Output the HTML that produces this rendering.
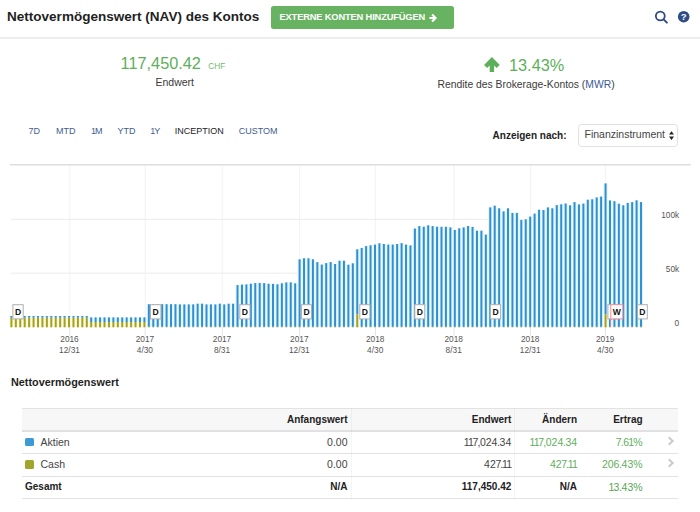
<!DOCTYPE html>
<html lang="de">
<head>
<meta charset="utf-8">
<title>Nettovermögenswert (NAV) des Kontos</title>
<style>
html,body{margin:0;padding:0;background:#fff;}
body{width:700px;height:512px;position:relative;overflow:hidden;font-family:"Liberation Sans",sans-serif;color:#333;}
.abs{position:absolute;white-space:nowrap;line-height:1;}
.title{left:7px;top:10.6px;font-size:12.4px;font-weight:bold;color:#1f1f1f;transform-origin:0 0;transform:scaleX(1.092);}
.btn{left:270.5px;top:6.2px;width:183.5px;height:23.3px;background:#68b361;border-radius:2.5px;color:#fff;font-weight:bold;font-size:9.3px;letter-spacing:-0.15px;box-sizing:border-box;padding:6.7px 0 0 9px;}
.hline{left:0;top:37px;width:700px;height:2px;background:#ededed;}
.big{font-size:16.3px;color:#5db05a;}
.chf{font-size:8.3px;color:#74b86f;}
.sub{font-size:10.5px;color:#3a3a3a;}
.link{color:#3a5a94;}
.tab{top:126.7px;font-size:9px;color:#3f5d92;}
.tab.act{color:#222;}
.tab.n1::first-letter{letter-spacing:-1px;}
.lab{font-size:10px;font-weight:bold;color:#222;}
.sel{left:577.5px;top:123.5px;width:100.5px;height:23px;box-sizing:border-box;border:1px solid #e1e1e1;border-radius:3.5px;background:#fff;font-size:10.5px;color:#444;padding:4.9px 0 0 6px;}
svg.chart{position:absolute;left:0;top:0;}
svg.chart text{font-family:"Liberation Sans",sans-serif;font-size:8.3px;fill:#555;}
svg.chart text.fl{font-weight:bold;fill:#111;font-size:8.6px;}
.h2{left:10.5px;top:377.9px;font-size:10.3px;font-weight:bold;color:#1f1f1f;transform-origin:0 0;transform:scaleX(1.052);}
table.t{position:absolute;left:22px;top:408px;width:656px;table-layout:fixed;border-collapse:collapse;font-size:10.5px;color:#444;}

.btn svg.arr{position:absolute;left:157.7px;top:6.5px;}
table.t th{background:#f7f7f7;border-top:1px solid #e3e3e3;border-bottom:2px solid #e1e1e1;height:22.8px;font-size:10px;font-weight:bold;color:#222;text-align:right;padding:0;}
table.t td{height:22.5px;border-bottom:1px solid #e2e2e2;text-align:right;padding:0 0 1.8px 0;}
table.t th,table.t td{box-sizing:border-box;}
table.t .c0{text-align:left;padding-left:3px;width:173px;}
table.t th.c1{width:152.5px;}
table.t th.c2{width:163.8px;}
table.t th.c3{width:65.8px;}
table.t th.c4{width:65.5px;}
table.t .c5{width:35.4px;padding-right:3.4px;}
table.t .c5 svg{vertical-align:middle;position:relative;top:-2px;}
table.t td.g{color:#62ae5e;}
table.t tr.tot td{font-weight:bold;color:#222;font-size:10px;padding-bottom:1.2px;height:22.5px;}
table.t tr.tot td.g{color:#56a653;font-weight:normal;font-size:10.5px;}
i.sq{display:inline-block;width:9.3px;height:8.8px;border-radius:1.5px;vertical-align:-0.6px;margin:0 6.7px 0 -0.5px;}

table.t b{font-weight:inherit;}
table.t b.o{margin:0 -0.8px;}
table.t b.p{margin:0 -0.4px;}
table.t b.s{margin:0 -0.6px 0 -0.4px;}
.vd{position:absolute;top:408px;width:1px;height:91px;background:rgba(0,0,0,0.04);}
</style>
</head>
<body>
<svg class="chart" width="700" height="512" viewBox="0 0 700 512">
<g shape-rendering="auto">
<line x1="69.8" y1="165" x2="69.8" y2="327" stroke="#f4f4f4" stroke-width="1.2"/>
<line x1="69.8" y1="327" x2="69.8" y2="335.5" stroke="#e4e4e4" stroke-width="1"/>
<line x1="145.2" y1="165" x2="145.2" y2="327" stroke="#f4f4f4" stroke-width="1.2"/>
<line x1="145.2" y1="327" x2="145.2" y2="335.5" stroke="#e4e4e4" stroke-width="1"/>
<line x1="222.3" y1="165" x2="222.3" y2="327" stroke="#f4f4f4" stroke-width="1.2"/>
<line x1="222.3" y1="327" x2="222.3" y2="335.5" stroke="#e4e4e4" stroke-width="1"/>
<line x1="299.6" y1="165" x2="299.6" y2="327" stroke="#f4f4f4" stroke-width="1.2"/>
<line x1="299.6" y1="327" x2="299.6" y2="335.5" stroke="#e4e4e4" stroke-width="1"/>
<line x1="375.5" y1="165" x2="375.5" y2="327" stroke="#f4f4f4" stroke-width="1.2"/>
<line x1="375.5" y1="327" x2="375.5" y2="335.5" stroke="#e4e4e4" stroke-width="1"/>
<line x1="454.0" y1="165" x2="454.0" y2="327" stroke="#f4f4f4" stroke-width="1.2"/>
<line x1="454.0" y1="327" x2="454.0" y2="335.5" stroke="#e4e4e4" stroke-width="1"/>
<line x1="530.5" y1="165" x2="530.5" y2="327" stroke="#f4f4f4" stroke-width="1.2"/>
<line x1="530.5" y1="327" x2="530.5" y2="335.5" stroke="#e4e4e4" stroke-width="1"/>
<line x1="605.5" y1="165" x2="605.5" y2="327" stroke="#f4f4f4" stroke-width="1.2"/>
<line x1="605.5" y1="327" x2="605.5" y2="335.5" stroke="#e4e4e4" stroke-width="1"/>
<line x1="11" y1="219.3" x2="643.5" y2="219.3" stroke="#ececec" stroke-width="1"/>
<line x1="11" y1="273.2" x2="643.5" y2="273.2" stroke="#ececec" stroke-width="1"/>
<line x1="10" y1="164.7" x2="690.8" y2="164.7" stroke="#dedede" stroke-width="1.5"/>
</g>
<g>
<rect x="9.18" y="316.0" width="4.45" height="1.7" fill="#e6f6ff"/>
<rect x="9.18" y="317.7" width="4.45" height="9.6" fill="#fafae2"/>
<rect x="13.62" y="316.0" width="4.45" height="1.7" fill="#e6f6ff"/>
<rect x="13.62" y="317.7" width="4.45" height="9.6" fill="#fafae2"/>
<rect x="18.05" y="316.0" width="4.45" height="1.7" fill="#e6f6ff"/>
<rect x="18.05" y="317.7" width="4.45" height="9.6" fill="#fafae2"/>
<rect x="22.48" y="316.0" width="4.45" height="1.7" fill="#e6f6ff"/>
<rect x="22.48" y="317.7" width="4.45" height="9.6" fill="#fafae2"/>
<rect x="26.92" y="316.0" width="4.45" height="1.7" fill="#e6f6ff"/>
<rect x="26.92" y="317.7" width="4.45" height="9.6" fill="#fafae2"/>
<rect x="31.35" y="316.0" width="4.45" height="1.7" fill="#e6f6ff"/>
<rect x="31.35" y="317.7" width="4.45" height="9.6" fill="#fafae2"/>
<rect x="35.79" y="316.0" width="4.45" height="1.7" fill="#e6f6ff"/>
<rect x="35.79" y="317.7" width="4.45" height="9.6" fill="#fafae2"/>
<rect x="40.22" y="316.0" width="4.45" height="1.7" fill="#e6f6ff"/>
<rect x="40.22" y="317.7" width="4.45" height="9.6" fill="#fafae2"/>
<rect x="44.66" y="316.0" width="4.45" height="1.7" fill="#e6f6ff"/>
<rect x="44.66" y="317.7" width="4.45" height="9.6" fill="#fafae2"/>
<rect x="49.09" y="316.0" width="4.45" height="1.7" fill="#e6f6ff"/>
<rect x="49.09" y="317.7" width="4.45" height="9.6" fill="#fafae2"/>
<rect x="53.52" y="316.0" width="4.45" height="1.7" fill="#e6f6ff"/>
<rect x="53.52" y="317.7" width="4.45" height="9.6" fill="#fafae2"/>
<rect x="57.96" y="316.0" width="4.45" height="1.7" fill="#e6f6ff"/>
<rect x="57.96" y="317.7" width="4.45" height="9.6" fill="#fafae2"/>
<rect x="62.39" y="316.0" width="4.45" height="1.7" fill="#e6f6ff"/>
<rect x="62.39" y="317.7" width="4.45" height="9.6" fill="#fafae2"/>
<rect x="66.83" y="316.0" width="4.45" height="1.7" fill="#e6f6ff"/>
<rect x="66.83" y="317.7" width="4.45" height="9.6" fill="#fafae2"/>
<rect x="71.26" y="316.0" width="4.45" height="1.7" fill="#e6f6ff"/>
<rect x="71.26" y="317.7" width="4.45" height="9.6" fill="#fafae2"/>
<rect x="75.69" y="316.0" width="4.45" height="1.7" fill="#e6f6ff"/>
<rect x="75.69" y="317.7" width="4.45" height="9.6" fill="#fafae2"/>
<rect x="80.13" y="316.0" width="4.45" height="1.7" fill="#e6f6ff"/>
<rect x="80.13" y="317.7" width="4.45" height="9.6" fill="#fafae2"/>
<rect x="84.56" y="316.0" width="4.45" height="1.7" fill="#e6f6ff"/>
<rect x="84.56" y="317.7" width="4.45" height="9.6" fill="#fafae2"/>
<rect x="89.00" y="317.4" width="4.45" height="4.6" fill="#e6f6ff"/>
<rect x="89.00" y="322.0" width="4.45" height="5.3" fill="#fafae2"/>
<rect x="93.43" y="317.4" width="4.45" height="4.6" fill="#e6f6ff"/>
<rect x="93.43" y="322.0" width="4.45" height="5.3" fill="#fafae2"/>
<rect x="97.86" y="317.4" width="4.45" height="4.6" fill="#e6f6ff"/>
<rect x="97.86" y="322.0" width="4.45" height="5.3" fill="#fafae2"/>
<rect x="102.30" y="317.4" width="4.45" height="4.6" fill="#e6f6ff"/>
<rect x="102.30" y="322.0" width="4.45" height="5.3" fill="#fafae2"/>
<rect x="106.73" y="317.4" width="4.45" height="4.6" fill="#e6f6ff"/>
<rect x="106.73" y="322.0" width="4.45" height="5.3" fill="#fafae2"/>
<rect x="111.17" y="317.4" width="4.45" height="4.6" fill="#e6f6ff"/>
<rect x="111.17" y="322.0" width="4.45" height="5.3" fill="#fafae2"/>
<rect x="115.60" y="317.4" width="4.45" height="4.6" fill="#e6f6ff"/>
<rect x="115.60" y="322.0" width="4.45" height="5.3" fill="#fafae2"/>
<rect x="120.03" y="317.4" width="4.45" height="4.6" fill="#e6f6ff"/>
<rect x="120.03" y="322.0" width="4.45" height="5.3" fill="#fafae2"/>
<rect x="124.47" y="317.4" width="4.45" height="4.6" fill="#e6f6ff"/>
<rect x="124.47" y="322.0" width="4.45" height="5.3" fill="#fafae2"/>
<rect x="128.90" y="317.4" width="4.45" height="4.6" fill="#e6f6ff"/>
<rect x="128.90" y="322.0" width="4.45" height="5.3" fill="#fafae2"/>
<rect x="133.33" y="317.4" width="4.45" height="4.6" fill="#e6f6ff"/>
<rect x="133.33" y="322.0" width="4.45" height="5.3" fill="#fafae2"/>
<rect x="137.77" y="317.4" width="4.45" height="4.6" fill="#e6f6ff"/>
<rect x="137.77" y="322.0" width="4.45" height="5.3" fill="#fafae2"/>
<rect x="142.20" y="317.4" width="4.45" height="4.6" fill="#e6f6ff"/>
<rect x="142.20" y="322.0" width="4.45" height="5.3" fill="#fafae2"/>
<rect x="146.64" y="304.2" width="4.45" height="22.6" fill="#e6f6ff"/>
<rect x="151.07" y="304.2" width="4.45" height="22.6" fill="#e6f6ff"/>
<rect x="155.50" y="304.2" width="4.45" height="22.6" fill="#e6f6ff"/>
<rect x="159.94" y="304.2" width="4.45" height="22.6" fill="#e6f6ff"/>
<rect x="164.37" y="304.2" width="4.45" height="22.6" fill="#e6f6ff"/>
<rect x="168.81" y="304.2" width="4.45" height="22.6" fill="#e6f6ff"/>
<rect x="173.24" y="304.2" width="4.45" height="22.6" fill="#e6f6ff"/>
<rect x="177.68" y="304.4" width="4.45" height="22.4" fill="#e6f6ff"/>
<rect x="182.11" y="304.4" width="4.45" height="22.4" fill="#e6f6ff"/>
<rect x="186.54" y="304.4" width="4.45" height="22.4" fill="#e6f6ff"/>
<rect x="190.98" y="304.4" width="4.45" height="22.4" fill="#e6f6ff"/>
<rect x="195.41" y="303.7" width="4.45" height="23.1" fill="#e6f6ff"/>
<rect x="199.84" y="303.7" width="4.45" height="23.1" fill="#e6f6ff"/>
<rect x="204.28" y="304.4" width="4.45" height="22.4" fill="#e6f6ff"/>
<rect x="208.71" y="304.4" width="4.45" height="22.4" fill="#e6f6ff"/>
<rect x="213.15" y="304.4" width="4.45" height="22.4" fill="#e6f6ff"/>
<rect x="217.58" y="303.7" width="4.45" height="23.1" fill="#e6f6ff"/>
<rect x="222.01" y="304.4" width="4.45" height="22.4" fill="#e6f6ff"/>
<rect x="226.45" y="303.7" width="4.45" height="23.1" fill="#e6f6ff"/>
<rect x="230.88" y="303.7" width="4.45" height="23.1" fill="#e6f6ff"/>
<rect x="235.32" y="285.1" width="4.45" height="41.7" fill="#e6f6ff"/>
<rect x="239.75" y="284.6" width="4.45" height="42.2" fill="#e6f6ff"/>
<rect x="244.19" y="284.4" width="4.45" height="42.4" fill="#e6f6ff"/>
<rect x="248.62" y="283.7" width="4.45" height="43.1" fill="#e6f6ff"/>
<rect x="253.05" y="283.1" width="4.45" height="43.7" fill="#e6f6ff"/>
<rect x="257.49" y="283.0" width="4.45" height="43.8" fill="#e6f6ff"/>
<rect x="261.92" y="283.1" width="4.45" height="43.7" fill="#e6f6ff"/>
<rect x="266.36" y="283.7" width="4.45" height="43.1" fill="#e6f6ff"/>
<rect x="270.79" y="283.9" width="4.45" height="42.9" fill="#e6f6ff"/>
<rect x="275.22" y="284.3" width="4.45" height="42.5" fill="#e6f6ff"/>
<rect x="279.66" y="283.3" width="4.45" height="43.5" fill="#e6f6ff"/>
<rect x="284.09" y="282.4" width="4.45" height="44.4" fill="#e6f6ff"/>
<rect x="288.52" y="282.4" width="4.45" height="44.4" fill="#e6f6ff"/>
<rect x="292.96" y="283.3" width="4.45" height="43.5" fill="#e6f6ff"/>
<rect x="297.39" y="259.3" width="4.45" height="67.5" fill="#e6f6ff"/>
<rect x="301.83" y="258.3" width="4.45" height="68.5" fill="#e6f6ff"/>
<rect x="306.26" y="258.3" width="4.45" height="68.5" fill="#e6f6ff"/>
<rect x="310.69" y="259.3" width="4.45" height="67.5" fill="#e6f6ff"/>
<rect x="315.13" y="262.1" width="4.45" height="64.7" fill="#e6f6ff"/>
<rect x="319.56" y="264.6" width="4.45" height="62.2" fill="#e6f6ff"/>
<rect x="324.00" y="263.1" width="4.45" height="63.7" fill="#e6f6ff"/>
<rect x="328.43" y="262.1" width="4.45" height="64.7" fill="#e6f6ff"/>
<rect x="332.87" y="264.0" width="4.45" height="62.8" fill="#e6f6ff"/>
<rect x="337.30" y="260.7" width="4.45" height="66.1" fill="#e6f6ff"/>
<rect x="341.73" y="260.7" width="4.45" height="66.1" fill="#e6f6ff"/>
<rect x="346.17" y="264.7" width="4.45" height="62.1" fill="#e6f6ff"/>
<rect x="350.60" y="263.3" width="4.45" height="63.5" fill="#e6f6ff"/>
<rect x="355.04" y="249.3" width="4.45" height="65.0" fill="#e6f6ff"/>
<rect x="355.04" y="314.3" width="4.45" height="13.0" fill="#fafae2"/>
<rect x="359.47" y="247.9" width="4.45" height="78.9" fill="#e6f6ff"/>
<rect x="363.90" y="246.1" width="4.45" height="80.7" fill="#e6f6ff"/>
<rect x="368.34" y="245.3" width="4.45" height="81.5" fill="#e6f6ff"/>
<rect x="372.77" y="244.6" width="4.45" height="82.2" fill="#e6f6ff"/>
<rect x="377.20" y="243.3" width="4.45" height="83.5" fill="#e6f6ff"/>
<rect x="381.64" y="244.0" width="4.45" height="82.8" fill="#e6f6ff"/>
<rect x="386.07" y="244.6" width="4.45" height="82.2" fill="#e6f6ff"/>
<rect x="390.51" y="244.6" width="4.45" height="82.2" fill="#e6f6ff"/>
<rect x="394.94" y="244.0" width="4.45" height="82.8" fill="#e6f6ff"/>
<rect x="399.38" y="243.1" width="4.45" height="83.7" fill="#e6f6ff"/>
<rect x="403.81" y="244.6" width="4.45" height="82.2" fill="#e6f6ff"/>
<rect x="408.24" y="245.4" width="4.45" height="81.4" fill="#e6f6ff"/>
<rect x="412.68" y="228.6" width="4.45" height="98.2" fill="#e6f6ff"/>
<rect x="417.11" y="226.1" width="4.45" height="100.7" fill="#e6f6ff"/>
<rect x="421.55" y="226.7" width="4.45" height="100.1" fill="#e6f6ff"/>
<rect x="425.98" y="225.3" width="4.45" height="101.5" fill="#e6f6ff"/>
<rect x="430.41" y="226.1" width="4.45" height="100.7" fill="#e6f6ff"/>
<rect x="434.85" y="226.7" width="4.45" height="100.1" fill="#e6f6ff"/>
<rect x="439.28" y="226.8" width="4.45" height="100.0" fill="#e6f6ff"/>
<rect x="443.72" y="226.8" width="4.45" height="100.0" fill="#e6f6ff"/>
<rect x="448.15" y="227.4" width="4.45" height="99.4" fill="#e6f6ff"/>
<rect x="452.58" y="230.0" width="4.45" height="96.8" fill="#e6f6ff"/>
<rect x="457.02" y="228.3" width="4.45" height="98.5" fill="#e6f6ff"/>
<rect x="461.45" y="227.4" width="4.45" height="99.4" fill="#e6f6ff"/>
<rect x="465.88" y="226.0" width="4.45" height="100.8" fill="#e6f6ff"/>
<rect x="470.32" y="226.9" width="4.45" height="99.9" fill="#e6f6ff"/>
<rect x="474.75" y="230.7" width="4.45" height="96.1" fill="#e6f6ff"/>
<rect x="479.19" y="230.7" width="4.45" height="96.1" fill="#e6f6ff"/>
<rect x="483.62" y="234.6" width="4.45" height="92.2" fill="#e6f6ff"/>
<rect x="488.06" y="207.4" width="4.45" height="119.4" fill="#e6f6ff"/>
<rect x="492.49" y="205.7" width="4.45" height="121.1" fill="#e6f6ff"/>
<rect x="496.92" y="208.3" width="4.45" height="118.5" fill="#e6f6ff"/>
<rect x="501.36" y="211.4" width="4.45" height="115.4" fill="#e6f6ff"/>
<rect x="505.79" y="208.3" width="4.45" height="118.5" fill="#e6f6ff"/>
<rect x="510.23" y="212.9" width="4.45" height="113.9" fill="#e6f6ff"/>
<rect x="514.66" y="212.9" width="4.45" height="113.9" fill="#e6f6ff"/>
<rect x="519.09" y="220.0" width="4.45" height="106.8" fill="#e6f6ff"/>
<rect x="523.53" y="219.3" width="4.45" height="107.5" fill="#e6f6ff"/>
<rect x="527.96" y="216.6" width="4.45" height="110.2" fill="#e6f6ff"/>
<rect x="532.39" y="213.6" width="4.45" height="113.2" fill="#e6f6ff"/>
<rect x="536.83" y="209.7" width="4.45" height="117.1" fill="#e6f6ff"/>
<rect x="541.26" y="210.0" width="4.45" height="116.8" fill="#e6f6ff"/>
<rect x="545.70" y="207.4" width="4.45" height="119.4" fill="#e6f6ff"/>
<rect x="550.13" y="208.3" width="4.45" height="118.5" fill="#e6f6ff"/>
<rect x="554.57" y="205.1" width="4.45" height="121.7" fill="#e6f6ff"/>
<rect x="559.00" y="204.3" width="4.45" height="122.5" fill="#e6f6ff"/>
<rect x="563.43" y="203.5" width="4.45" height="123.3" fill="#e6f6ff"/>
<rect x="567.87" y="205.3" width="4.45" height="121.5" fill="#e6f6ff"/>
<rect x="572.30" y="202.1" width="4.45" height="124.7" fill="#e6f6ff"/>
<rect x="576.74" y="204.4" width="4.45" height="122.4" fill="#e6f6ff"/>
<rect x="581.17" y="203.6" width="4.45" height="123.2" fill="#e6f6ff"/>
<rect x="585.60" y="199.7" width="4.45" height="127.1" fill="#e6f6ff"/>
<rect x="590.04" y="199.3" width="4.45" height="127.5" fill="#e6f6ff"/>
<rect x="594.47" y="197.4" width="4.45" height="129.4" fill="#e6f6ff"/>
<rect x="598.90" y="196.6" width="4.45" height="130.2" fill="#e6f6ff"/>
<rect x="603.34" y="183.4" width="4.45" height="130.9" fill="#e6f6ff"/>
<rect x="603.34" y="314.3" width="4.45" height="13.0" fill="#fafae2"/>
<rect x="607.77" y="200.4" width="4.45" height="126.4" fill="#e6f6ff"/>
<rect x="612.21" y="201.2" width="4.45" height="125.6" fill="#e6f6ff"/>
<rect x="616.64" y="203.7" width="4.45" height="123.1" fill="#e6f6ff"/>
<rect x="621.08" y="205.3" width="4.45" height="121.5" fill="#e6f6ff"/>
<rect x="625.51" y="202.9" width="4.45" height="123.9" fill="#e6f6ff"/>
<rect x="629.94" y="202.1" width="4.45" height="124.7" fill="#e6f6ff"/>
<rect x="634.38" y="200.3" width="4.45" height="126.5" fill="#e6f6ff"/>
<rect x="638.81" y="202.1" width="4.45" height="124.7" fill="#e6f6ff"/>
<rect x="10.40" y="316.0" width="2.0" height="1.7" fill="#3090cf"/>
<rect x="10.40" y="317.7" width="2.0" height="9.6" fill="#a5a11e"/>
<rect x="14.83" y="316.0" width="2.0" height="1.7" fill="#3090cf"/>
<rect x="14.83" y="317.7" width="2.0" height="9.6" fill="#a5a11e"/>
<rect x="19.27" y="316.0" width="2.0" height="1.7" fill="#3090cf"/>
<rect x="19.27" y="317.7" width="2.0" height="9.6" fill="#a5a11e"/>
<rect x="23.70" y="316.0" width="2.0" height="1.7" fill="#3090cf"/>
<rect x="23.70" y="317.7" width="2.0" height="9.6" fill="#a5a11e"/>
<rect x="28.14" y="316.0" width="2.0" height="1.7" fill="#3090cf"/>
<rect x="28.14" y="317.7" width="2.0" height="9.6" fill="#a5a11e"/>
<rect x="32.57" y="316.0" width="2.0" height="1.7" fill="#3090cf"/>
<rect x="32.57" y="317.7" width="2.0" height="9.6" fill="#a5a11e"/>
<rect x="37.00" y="316.0" width="2.0" height="1.7" fill="#3090cf"/>
<rect x="37.00" y="317.7" width="2.0" height="9.6" fill="#a5a11e"/>
<rect x="41.44" y="316.0" width="2.0" height="1.7" fill="#3090cf"/>
<rect x="41.44" y="317.7" width="2.0" height="9.6" fill="#a5a11e"/>
<rect x="45.87" y="316.0" width="2.0" height="1.7" fill="#3090cf"/>
<rect x="45.87" y="317.7" width="2.0" height="9.6" fill="#a5a11e"/>
<rect x="50.31" y="316.0" width="2.0" height="1.7" fill="#3090cf"/>
<rect x="50.31" y="317.7" width="2.0" height="9.6" fill="#a5a11e"/>
<rect x="54.74" y="316.0" width="2.0" height="1.7" fill="#3090cf"/>
<rect x="54.74" y="317.7" width="2.0" height="9.6" fill="#a5a11e"/>
<rect x="59.17" y="316.0" width="2.0" height="1.7" fill="#3090cf"/>
<rect x="59.17" y="317.7" width="2.0" height="9.6" fill="#a5a11e"/>
<rect x="63.61" y="316.0" width="2.0" height="1.7" fill="#3090cf"/>
<rect x="63.61" y="317.7" width="2.0" height="9.6" fill="#a5a11e"/>
<rect x="68.04" y="316.0" width="2.0" height="1.7" fill="#3090cf"/>
<rect x="68.04" y="317.7" width="2.0" height="9.6" fill="#a5a11e"/>
<rect x="72.48" y="316.0" width="2.0" height="1.7" fill="#3090cf"/>
<rect x="72.48" y="317.7" width="2.0" height="9.6" fill="#a5a11e"/>
<rect x="76.91" y="316.0" width="2.0" height="1.7" fill="#3090cf"/>
<rect x="76.91" y="317.7" width="2.0" height="9.6" fill="#a5a11e"/>
<rect x="81.34" y="316.0" width="2.0" height="1.7" fill="#3090cf"/>
<rect x="81.34" y="317.7" width="2.0" height="9.6" fill="#a5a11e"/>
<rect x="85.78" y="316.0" width="2.0" height="1.7" fill="#3090cf"/>
<rect x="85.78" y="317.7" width="2.0" height="9.6" fill="#a5a11e"/>
<rect x="90.21" y="317.4" width="2.0" height="4.6" fill="#3090cf"/>
<rect x="90.21" y="322.0" width="2.0" height="5.3" fill="#a5a11e"/>
<rect x="94.65" y="317.4" width="2.0" height="4.6" fill="#3090cf"/>
<rect x="94.65" y="322.0" width="2.0" height="5.3" fill="#a5a11e"/>
<rect x="99.08" y="317.4" width="2.0" height="4.6" fill="#3090cf"/>
<rect x="99.08" y="322.0" width="2.0" height="5.3" fill="#a5a11e"/>
<rect x="103.51" y="317.4" width="2.0" height="4.6" fill="#3090cf"/>
<rect x="103.51" y="322.0" width="2.0" height="5.3" fill="#a5a11e"/>
<rect x="107.95" y="317.4" width="2.0" height="4.6" fill="#3090cf"/>
<rect x="107.95" y="322.0" width="2.0" height="5.3" fill="#a5a11e"/>
<rect x="112.38" y="317.4" width="2.0" height="4.6" fill="#3090cf"/>
<rect x="112.38" y="322.0" width="2.0" height="5.3" fill="#a5a11e"/>
<rect x="116.82" y="317.4" width="2.0" height="4.6" fill="#3090cf"/>
<rect x="116.82" y="322.0" width="2.0" height="5.3" fill="#a5a11e"/>
<rect x="121.25" y="317.4" width="2.0" height="4.6" fill="#3090cf"/>
<rect x="121.25" y="322.0" width="2.0" height="5.3" fill="#a5a11e"/>
<rect x="125.68" y="317.4" width="2.0" height="4.6" fill="#3090cf"/>
<rect x="125.68" y="322.0" width="2.0" height="5.3" fill="#a5a11e"/>
<rect x="130.12" y="317.4" width="2.0" height="4.6" fill="#3090cf"/>
<rect x="130.12" y="322.0" width="2.0" height="5.3" fill="#a5a11e"/>
<rect x="134.55" y="317.4" width="2.0" height="4.6" fill="#3090cf"/>
<rect x="134.55" y="322.0" width="2.0" height="5.3" fill="#a5a11e"/>
<rect x="138.99" y="317.4" width="2.0" height="4.6" fill="#3090cf"/>
<rect x="138.99" y="322.0" width="2.0" height="5.3" fill="#a5a11e"/>
<rect x="143.42" y="317.4" width="2.0" height="4.6" fill="#3090cf"/>
<rect x="143.42" y="322.0" width="2.0" height="5.3" fill="#a5a11e"/>
<rect x="147.85" y="304.2" width="2.0" height="22.6" fill="#3090cf"/>
<rect x="147.85" y="326.8" width="2.0" height="0.5" fill="#a5a11e"/>
<rect x="152.29" y="304.2" width="2.0" height="22.6" fill="#3090cf"/>
<rect x="152.29" y="326.8" width="2.0" height="0.5" fill="#a5a11e"/>
<rect x="156.72" y="304.2" width="2.0" height="22.6" fill="#3090cf"/>
<rect x="156.72" y="326.8" width="2.0" height="0.5" fill="#a5a11e"/>
<rect x="161.16" y="304.2" width="2.0" height="22.6" fill="#3090cf"/>
<rect x="161.16" y="326.8" width="2.0" height="0.5" fill="#a5a11e"/>
<rect x="165.59" y="304.2" width="2.0" height="22.6" fill="#3090cf"/>
<rect x="165.59" y="326.8" width="2.0" height="0.5" fill="#a5a11e"/>
<rect x="170.02" y="304.2" width="2.0" height="22.6" fill="#3090cf"/>
<rect x="170.02" y="326.8" width="2.0" height="0.5" fill="#a5a11e"/>
<rect x="174.46" y="304.2" width="2.0" height="22.6" fill="#3090cf"/>
<rect x="174.46" y="326.8" width="2.0" height="0.5" fill="#a5a11e"/>
<rect x="178.89" y="304.4" width="2.0" height="22.4" fill="#3090cf"/>
<rect x="178.89" y="326.8" width="2.0" height="0.5" fill="#a5a11e"/>
<rect x="183.33" y="304.4" width="2.0" height="22.4" fill="#3090cf"/>
<rect x="183.33" y="326.8" width="2.0" height="0.5" fill="#a5a11e"/>
<rect x="187.76" y="304.4" width="2.0" height="22.4" fill="#3090cf"/>
<rect x="187.76" y="326.8" width="2.0" height="0.5" fill="#a5a11e"/>
<rect x="192.19" y="304.4" width="2.0" height="22.4" fill="#3090cf"/>
<rect x="192.19" y="326.8" width="2.0" height="0.5" fill="#a5a11e"/>
<rect x="196.63" y="303.7" width="2.0" height="23.1" fill="#3090cf"/>
<rect x="196.63" y="326.8" width="2.0" height="0.5" fill="#a5a11e"/>
<rect x="201.06" y="303.7" width="2.0" height="23.1" fill="#3090cf"/>
<rect x="201.06" y="326.8" width="2.0" height="0.5" fill="#a5a11e"/>
<rect x="205.50" y="304.4" width="2.0" height="22.4" fill="#3090cf"/>
<rect x="205.50" y="326.8" width="2.0" height="0.5" fill="#a5a11e"/>
<rect x="209.93" y="304.4" width="2.0" height="22.4" fill="#3090cf"/>
<rect x="209.93" y="326.8" width="2.0" height="0.5" fill="#a5a11e"/>
<rect x="214.36" y="304.4" width="2.0" height="22.4" fill="#3090cf"/>
<rect x="214.36" y="326.8" width="2.0" height="0.5" fill="#a5a11e"/>
<rect x="218.80" y="303.7" width="2.0" height="23.1" fill="#3090cf"/>
<rect x="218.80" y="326.8" width="2.0" height="0.5" fill="#a5a11e"/>
<rect x="223.23" y="304.4" width="2.0" height="22.4" fill="#3090cf"/>
<rect x="223.23" y="326.8" width="2.0" height="0.5" fill="#a5a11e"/>
<rect x="227.67" y="303.7" width="2.0" height="23.1" fill="#3090cf"/>
<rect x="227.67" y="326.8" width="2.0" height="0.5" fill="#a5a11e"/>
<rect x="232.10" y="303.7" width="2.0" height="23.1" fill="#3090cf"/>
<rect x="232.10" y="326.8" width="2.0" height="0.5" fill="#a5a11e"/>
<rect x="236.53" y="285.1" width="2.0" height="41.7" fill="#3090cf"/>
<rect x="236.53" y="326.8" width="2.0" height="0.5" fill="#a5a11e"/>
<rect x="240.97" y="284.6" width="2.0" height="42.2" fill="#3090cf"/>
<rect x="240.97" y="326.8" width="2.0" height="0.5" fill="#a5a11e"/>
<rect x="245.40" y="284.4" width="2.0" height="42.4" fill="#3090cf"/>
<rect x="245.40" y="326.8" width="2.0" height="0.5" fill="#a5a11e"/>
<rect x="249.84" y="283.7" width="2.0" height="43.1" fill="#3090cf"/>
<rect x="249.84" y="326.8" width="2.0" height="0.5" fill="#a5a11e"/>
<rect x="254.27" y="283.1" width="2.0" height="43.7" fill="#3090cf"/>
<rect x="254.27" y="326.8" width="2.0" height="0.5" fill="#a5a11e"/>
<rect x="258.70" y="283.0" width="2.0" height="43.8" fill="#3090cf"/>
<rect x="258.70" y="326.8" width="2.0" height="0.5" fill="#a5a11e"/>
<rect x="263.14" y="283.1" width="2.0" height="43.7" fill="#3090cf"/>
<rect x="263.14" y="326.8" width="2.0" height="0.5" fill="#a5a11e"/>
<rect x="267.57" y="283.7" width="2.0" height="43.1" fill="#3090cf"/>
<rect x="267.57" y="326.8" width="2.0" height="0.5" fill="#a5a11e"/>
<rect x="272.01" y="283.9" width="2.0" height="42.9" fill="#3090cf"/>
<rect x="272.01" y="326.8" width="2.0" height="0.5" fill="#a5a11e"/>
<rect x="276.44" y="284.3" width="2.0" height="42.5" fill="#3090cf"/>
<rect x="276.44" y="326.8" width="2.0" height="0.5" fill="#a5a11e"/>
<rect x="280.87" y="283.3" width="2.0" height="43.5" fill="#3090cf"/>
<rect x="280.87" y="326.8" width="2.0" height="0.5" fill="#a5a11e"/>
<rect x="285.31" y="282.4" width="2.0" height="44.4" fill="#3090cf"/>
<rect x="285.31" y="326.8" width="2.0" height="0.5" fill="#a5a11e"/>
<rect x="289.74" y="282.4" width="2.0" height="44.4" fill="#3090cf"/>
<rect x="289.74" y="326.8" width="2.0" height="0.5" fill="#a5a11e"/>
<rect x="294.18" y="283.3" width="2.0" height="43.5" fill="#3090cf"/>
<rect x="294.18" y="326.8" width="2.0" height="0.5" fill="#a5a11e"/>
<rect x="298.61" y="259.3" width="2.0" height="67.5" fill="#3090cf"/>
<rect x="298.61" y="326.8" width="2.0" height="0.5" fill="#a5a11e"/>
<rect x="303.04" y="258.3" width="2.0" height="68.5" fill="#3090cf"/>
<rect x="303.04" y="326.8" width="2.0" height="0.5" fill="#a5a11e"/>
<rect x="307.48" y="258.3" width="2.0" height="68.5" fill="#3090cf"/>
<rect x="307.48" y="326.8" width="2.0" height="0.5" fill="#a5a11e"/>
<rect x="311.91" y="259.3" width="2.0" height="67.5" fill="#3090cf"/>
<rect x="311.91" y="326.8" width="2.0" height="0.5" fill="#a5a11e"/>
<rect x="316.35" y="262.1" width="2.0" height="64.7" fill="#3090cf"/>
<rect x="316.35" y="326.8" width="2.0" height="0.5" fill="#a5a11e"/>
<rect x="320.78" y="264.6" width="2.0" height="62.2" fill="#3090cf"/>
<rect x="320.78" y="326.8" width="2.0" height="0.5" fill="#a5a11e"/>
<rect x="325.21" y="263.1" width="2.0" height="63.7" fill="#3090cf"/>
<rect x="325.21" y="326.8" width="2.0" height="0.5" fill="#a5a11e"/>
<rect x="329.65" y="262.1" width="2.0" height="64.7" fill="#3090cf"/>
<rect x="329.65" y="326.8" width="2.0" height="0.5" fill="#a5a11e"/>
<rect x="334.08" y="264.0" width="2.0" height="62.8" fill="#3090cf"/>
<rect x="334.08" y="326.8" width="2.0" height="0.5" fill="#a5a11e"/>
<rect x="338.52" y="260.7" width="2.0" height="66.1" fill="#3090cf"/>
<rect x="338.52" y="326.8" width="2.0" height="0.5" fill="#a5a11e"/>
<rect x="342.95" y="260.7" width="2.0" height="66.1" fill="#3090cf"/>
<rect x="342.95" y="326.8" width="2.0" height="0.5" fill="#a5a11e"/>
<rect x="347.38" y="264.7" width="2.0" height="62.1" fill="#3090cf"/>
<rect x="347.38" y="326.8" width="2.0" height="0.5" fill="#a5a11e"/>
<rect x="351.82" y="263.3" width="2.0" height="63.5" fill="#3090cf"/>
<rect x="351.82" y="326.8" width="2.0" height="0.5" fill="#a5a11e"/>
<rect x="356.25" y="249.3" width="2.0" height="65.0" fill="#3090cf"/>
<rect x="356.25" y="314.3" width="2.0" height="13.0" fill="#a5a11e"/>
<rect x="360.69" y="247.9" width="2.0" height="78.9" fill="#3090cf"/>
<rect x="360.69" y="326.8" width="2.0" height="0.5" fill="#a5a11e"/>
<rect x="365.12" y="246.1" width="2.0" height="80.7" fill="#3090cf"/>
<rect x="365.12" y="326.8" width="2.0" height="0.5" fill="#a5a11e"/>
<rect x="369.55" y="245.3" width="2.0" height="81.5" fill="#3090cf"/>
<rect x="369.55" y="326.8" width="2.0" height="0.5" fill="#a5a11e"/>
<rect x="373.99" y="244.6" width="2.0" height="82.2" fill="#3090cf"/>
<rect x="373.99" y="326.8" width="2.0" height="0.5" fill="#a5a11e"/>
<rect x="378.42" y="243.3" width="2.0" height="83.5" fill="#3090cf"/>
<rect x="378.42" y="326.8" width="2.0" height="0.5" fill="#a5a11e"/>
<rect x="382.86" y="244.0" width="2.0" height="82.8" fill="#3090cf"/>
<rect x="382.86" y="326.8" width="2.0" height="0.5" fill="#a5a11e"/>
<rect x="387.29" y="244.6" width="2.0" height="82.2" fill="#3090cf"/>
<rect x="387.29" y="326.8" width="2.0" height="0.5" fill="#a5a11e"/>
<rect x="391.72" y="244.6" width="2.0" height="82.2" fill="#3090cf"/>
<rect x="391.72" y="326.8" width="2.0" height="0.5" fill="#a5a11e"/>
<rect x="396.16" y="244.0" width="2.0" height="82.8" fill="#3090cf"/>
<rect x="396.16" y="326.8" width="2.0" height="0.5" fill="#a5a11e"/>
<rect x="400.59" y="243.1" width="2.0" height="83.7" fill="#3090cf"/>
<rect x="400.59" y="326.8" width="2.0" height="0.5" fill="#a5a11e"/>
<rect x="405.03" y="244.6" width="2.0" height="82.2" fill="#3090cf"/>
<rect x="405.03" y="326.8" width="2.0" height="0.5" fill="#a5a11e"/>
<rect x="409.46" y="245.4" width="2.0" height="81.4" fill="#3090cf"/>
<rect x="409.46" y="326.8" width="2.0" height="0.5" fill="#a5a11e"/>
<rect x="413.89" y="228.6" width="2.0" height="98.2" fill="#3090cf"/>
<rect x="413.89" y="326.8" width="2.0" height="0.5" fill="#a5a11e"/>
<rect x="418.33" y="226.1" width="2.0" height="100.7" fill="#3090cf"/>
<rect x="418.33" y="326.8" width="2.0" height="0.5" fill="#a5a11e"/>
<rect x="422.76" y="226.7" width="2.0" height="100.1" fill="#3090cf"/>
<rect x="422.76" y="326.8" width="2.0" height="0.5" fill="#a5a11e"/>
<rect x="427.20" y="225.3" width="2.0" height="101.5" fill="#3090cf"/>
<rect x="427.20" y="326.8" width="2.0" height="0.5" fill="#a5a11e"/>
<rect x="431.63" y="226.1" width="2.0" height="100.7" fill="#3090cf"/>
<rect x="431.63" y="326.8" width="2.0" height="0.5" fill="#a5a11e"/>
<rect x="436.06" y="226.7" width="2.0" height="100.1" fill="#3090cf"/>
<rect x="436.06" y="326.8" width="2.0" height="0.5" fill="#a5a11e"/>
<rect x="440.50" y="226.8" width="2.0" height="100.0" fill="#3090cf"/>
<rect x="440.50" y="326.8" width="2.0" height="0.5" fill="#a5a11e"/>
<rect x="444.93" y="226.8" width="2.0" height="100.0" fill="#3090cf"/>
<rect x="444.93" y="326.8" width="2.0" height="0.5" fill="#a5a11e"/>
<rect x="449.37" y="227.4" width="2.0" height="99.4" fill="#3090cf"/>
<rect x="449.37" y="326.8" width="2.0" height="0.5" fill="#a5a11e"/>
<rect x="453.80" y="230.0" width="2.0" height="96.8" fill="#3090cf"/>
<rect x="453.80" y="326.8" width="2.0" height="0.5" fill="#a5a11e"/>
<rect x="458.23" y="228.3" width="2.0" height="98.5" fill="#3090cf"/>
<rect x="458.23" y="326.8" width="2.0" height="0.5" fill="#a5a11e"/>
<rect x="462.67" y="227.4" width="2.0" height="99.4" fill="#3090cf"/>
<rect x="462.67" y="326.8" width="2.0" height="0.5" fill="#a5a11e"/>
<rect x="467.10" y="226.0" width="2.0" height="100.8" fill="#3090cf"/>
<rect x="467.10" y="326.8" width="2.0" height="0.5" fill="#a5a11e"/>
<rect x="471.54" y="226.9" width="2.0" height="99.9" fill="#3090cf"/>
<rect x="471.54" y="326.8" width="2.0" height="0.5" fill="#a5a11e"/>
<rect x="475.97" y="230.7" width="2.0" height="96.1" fill="#3090cf"/>
<rect x="475.97" y="326.8" width="2.0" height="0.5" fill="#a5a11e"/>
<rect x="480.40" y="230.7" width="2.0" height="96.1" fill="#3090cf"/>
<rect x="480.40" y="326.8" width="2.0" height="0.5" fill="#a5a11e"/>
<rect x="484.84" y="234.6" width="2.0" height="92.2" fill="#3090cf"/>
<rect x="484.84" y="326.8" width="2.0" height="0.5" fill="#a5a11e"/>
<rect x="489.27" y="207.4" width="2.0" height="119.4" fill="#3090cf"/>
<rect x="489.27" y="326.8" width="2.0" height="0.5" fill="#a5a11e"/>
<rect x="493.71" y="205.7" width="2.0" height="121.1" fill="#3090cf"/>
<rect x="493.71" y="326.8" width="2.0" height="0.5" fill="#a5a11e"/>
<rect x="498.14" y="208.3" width="2.0" height="118.5" fill="#3090cf"/>
<rect x="498.14" y="326.8" width="2.0" height="0.5" fill="#a5a11e"/>
<rect x="502.57" y="211.4" width="2.0" height="115.4" fill="#3090cf"/>
<rect x="502.57" y="326.8" width="2.0" height="0.5" fill="#a5a11e"/>
<rect x="507.01" y="208.3" width="2.0" height="118.5" fill="#3090cf"/>
<rect x="507.01" y="326.8" width="2.0" height="0.5" fill="#a5a11e"/>
<rect x="511.44" y="212.9" width="2.0" height="113.9" fill="#3090cf"/>
<rect x="511.44" y="326.8" width="2.0" height="0.5" fill="#a5a11e"/>
<rect x="515.88" y="212.9" width="2.0" height="113.9" fill="#3090cf"/>
<rect x="515.88" y="326.8" width="2.0" height="0.5" fill="#a5a11e"/>
<rect x="520.31" y="220.0" width="2.0" height="106.8" fill="#3090cf"/>
<rect x="520.31" y="326.8" width="2.0" height="0.5" fill="#a5a11e"/>
<rect x="524.74" y="219.3" width="2.0" height="107.5" fill="#3090cf"/>
<rect x="524.74" y="326.8" width="2.0" height="0.5" fill="#a5a11e"/>
<rect x="529.18" y="216.6" width="2.0" height="110.2" fill="#3090cf"/>
<rect x="529.18" y="326.8" width="2.0" height="0.5" fill="#a5a11e"/>
<rect x="533.61" y="213.6" width="2.0" height="113.2" fill="#3090cf"/>
<rect x="533.61" y="326.8" width="2.0" height="0.5" fill="#a5a11e"/>
<rect x="538.05" y="209.7" width="2.0" height="117.1" fill="#3090cf"/>
<rect x="538.05" y="326.8" width="2.0" height="0.5" fill="#a5a11e"/>
<rect x="542.48" y="210.0" width="2.0" height="116.8" fill="#3090cf"/>
<rect x="542.48" y="326.8" width="2.0" height="0.5" fill="#a5a11e"/>
<rect x="546.91" y="207.4" width="2.0" height="119.4" fill="#3090cf"/>
<rect x="546.91" y="326.8" width="2.0" height="0.5" fill="#a5a11e"/>
<rect x="551.35" y="208.3" width="2.0" height="118.5" fill="#3090cf"/>
<rect x="551.35" y="326.8" width="2.0" height="0.5" fill="#a5a11e"/>
<rect x="555.78" y="205.1" width="2.0" height="121.7" fill="#3090cf"/>
<rect x="555.78" y="326.8" width="2.0" height="0.5" fill="#a5a11e"/>
<rect x="560.22" y="204.3" width="2.0" height="122.5" fill="#3090cf"/>
<rect x="560.22" y="326.8" width="2.0" height="0.5" fill="#a5a11e"/>
<rect x="564.65" y="203.5" width="2.0" height="123.3" fill="#3090cf"/>
<rect x="564.65" y="326.8" width="2.0" height="0.5" fill="#a5a11e"/>
<rect x="569.08" y="205.3" width="2.0" height="121.5" fill="#3090cf"/>
<rect x="569.08" y="326.8" width="2.0" height="0.5" fill="#a5a11e"/>
<rect x="573.52" y="202.1" width="2.0" height="124.7" fill="#3090cf"/>
<rect x="573.52" y="326.8" width="2.0" height="0.5" fill="#a5a11e"/>
<rect x="577.95" y="204.4" width="2.0" height="122.4" fill="#3090cf"/>
<rect x="577.95" y="326.8" width="2.0" height="0.5" fill="#a5a11e"/>
<rect x="582.39" y="203.6" width="2.0" height="123.2" fill="#3090cf"/>
<rect x="582.39" y="326.8" width="2.0" height="0.5" fill="#a5a11e"/>
<rect x="586.82" y="199.7" width="2.0" height="127.1" fill="#3090cf"/>
<rect x="586.82" y="326.8" width="2.0" height="0.5" fill="#a5a11e"/>
<rect x="591.25" y="199.3" width="2.0" height="127.5" fill="#3090cf"/>
<rect x="591.25" y="326.8" width="2.0" height="0.5" fill="#a5a11e"/>
<rect x="595.69" y="197.4" width="2.0" height="129.4" fill="#3090cf"/>
<rect x="595.69" y="326.8" width="2.0" height="0.5" fill="#a5a11e"/>
<rect x="600.12" y="196.6" width="2.0" height="130.2" fill="#3090cf"/>
<rect x="600.12" y="326.8" width="2.0" height="0.5" fill="#a5a11e"/>
<rect x="604.56" y="183.4" width="2.0" height="130.9" fill="#3090cf"/>
<rect x="604.56" y="314.3" width="2.0" height="13.0" fill="#a5a11e"/>
<rect x="608.99" y="200.4" width="2.0" height="126.4" fill="#3090cf"/>
<rect x="608.99" y="326.8" width="2.0" height="0.5" fill="#a5a11e"/>
<rect x="613.42" y="201.2" width="2.0" height="125.6" fill="#3090cf"/>
<rect x="613.42" y="326.8" width="2.0" height="0.5" fill="#a5a11e"/>
<rect x="617.86" y="203.7" width="2.0" height="123.1" fill="#3090cf"/>
<rect x="617.86" y="326.8" width="2.0" height="0.5" fill="#a5a11e"/>
<rect x="622.29" y="205.3" width="2.0" height="121.5" fill="#3090cf"/>
<rect x="622.29" y="326.8" width="2.0" height="0.5" fill="#a5a11e"/>
<rect x="626.73" y="202.9" width="2.0" height="123.9" fill="#3090cf"/>
<rect x="626.73" y="326.8" width="2.0" height="0.5" fill="#a5a11e"/>
<rect x="631.16" y="202.1" width="2.0" height="124.7" fill="#3090cf"/>
<rect x="631.16" y="326.8" width="2.0" height="0.5" fill="#a5a11e"/>
<rect x="635.59" y="200.3" width="2.0" height="126.5" fill="#3090cf"/>
<rect x="635.59" y="326.8" width="2.0" height="0.5" fill="#a5a11e"/>
<rect x="640.03" y="202.1" width="2.0" height="124.7" fill="#3090cf"/>
<rect x="640.03" y="326.8" width="2.0" height="0.5" fill="#a5a11e"/>
</g>
<g>
<rect x="12.9" y="304.7" width="10.3" height="14.2" fill="#fff" stroke="#b0b0b0" stroke-width="1"/>
<text x="18.1" y="315" text-anchor="middle" class="fl">D</text>
<rect x="150.5" y="304.7" width="10.4" height="14.2" fill="#fff" stroke="#b0b0b0" stroke-width="1"/>
<text x="155.7" y="315" text-anchor="middle" class="fl">D</text>
<rect x="239.8" y="304.7" width="10.2" height="14.2" fill="#fff" stroke="#b0b0b0" stroke-width="1"/>
<text x="244.9" y="315" text-anchor="middle" class="fl">D</text>
<rect x="301.5" y="304.7" width="10.0" height="14.2" fill="#fff" stroke="#b0b0b0" stroke-width="1"/>
<text x="306.5" y="315" text-anchor="middle" class="fl">D</text>
<rect x="359.8" y="304.7" width="10.1" height="14.2" fill="#fff" stroke="#b0b0b0" stroke-width="1"/>
<text x="364.9" y="315" text-anchor="middle" class="fl">D</text>
<rect x="414.8" y="304.7" width="10.0" height="14.2" fill="#fff" stroke="#b0b0b0" stroke-width="1"/>
<text x="419.8" y="315" text-anchor="middle" class="fl">D</text>
<rect x="490.5" y="304.7" width="10.1" height="14.2" fill="#fff" stroke="#b0b0b0" stroke-width="1"/>
<text x="495.6" y="315" text-anchor="middle" class="fl">D</text>
<rect x="607.9" y="304.7" width="10.2" height="14.2" fill="#fff" stroke="#b0b0b0" stroke-width="1"/>
<line x1="610.5999999999999" y1="319" x2="610.5999999999999" y2="327" stroke="#ee8d9d" stroke-width="0.8"/>
<rect x="610.8" y="304.7" width="12.0" height="14.2" fill="#fff" stroke="#ee8d9d" stroke-width="1"/>
<text x="616.8" y="315" text-anchor="middle" class="fl">W</text>
<rect x="637.5" y="304.7" width="9.8" height="14.2" fill="#fff" stroke="#b0b0b0" stroke-width="1"/>
<text x="642.4" y="315" text-anchor="middle" class="fl">D</text>
</g>
<g class="ax">
<text x="69.5" y="342" text-anchor="middle">2016</text><text x="69.5" y="352.8" text-anchor="middle">12/31</text>
<text x="144.9" y="342" text-anchor="middle">2017</text><text x="144.9" y="352.8" text-anchor="middle">4/30</text>
<text x="222.0" y="342" text-anchor="middle">2017</text><text x="222.0" y="352.8" text-anchor="middle">8/31</text>
<text x="299.3" y="342" text-anchor="middle">2017</text><text x="299.3" y="352.8" text-anchor="middle">12/31</text>
<text x="375.2" y="342" text-anchor="middle">2018</text><text x="375.2" y="352.8" text-anchor="middle">4/30</text>
<text x="453.7" y="342" text-anchor="middle">2018</text><text x="453.7" y="352.8" text-anchor="middle">8/31</text>
<text x="530.2" y="342" text-anchor="middle">2018</text><text x="530.2" y="352.8" text-anchor="middle">12/31</text>
<text x="605.2" y="342" text-anchor="middle">2019</text><text x="605.2" y="352.8" text-anchor="middle">4/30</text>
<text x="679.2" y="217.8" text-anchor="end">100k</text>
<text x="679.2" y="271.8" text-anchor="end">50k</text>
<text x="679.2" y="325.8" text-anchor="end">0</text>
</g>
</svg>
<div class="abs title">Nettovermögenswert (NAV) des Kontos</div>
<div class="abs btn">EXTERNE KONTEN HINZUFÜGEN<svg class="arr" width="10" height="10" viewBox="0 0 10 10"><path d="M1.4 5H7.4M4.1 1.5L7.6 5L4.1 8.5" fill="none" stroke="#fff" stroke-width="2.1" stroke-linecap="butt" stroke-linejoin="miter"/></svg></div>
<svg class="abs" style="left:652px;top:8px" width="42" height="18" viewBox="652 8 42 18"><circle cx="660.3" cy="16" r="4.45" fill="none" stroke="#2d4b81" stroke-width="1.8"/><path d="M663.6 19.4L666.9 22.6" stroke="#2d4b81" stroke-width="2" stroke-linecap="round"/><circle cx="683.7" cy="16.7" r="5.8" fill="#2f4e86"/><text x="683.7" y="20.2" text-anchor="middle" font-family="Liberation Sans, sans-serif" font-weight="bold" font-size="9.5" fill="#fff">?</text></svg>
<div class="abs hline"></div>

<div class="abs big" style="left:120.6px;top:54.9px">117,450.42</div>
<div class="abs chf" style="left:208.3px;top:61.8px">CHF</div>
<div class="abs sub" style="left:155.5px;top:77.3px">Endwert</div>

<svg class="abs" style="left:480px;top:54px" width="24" height="20" viewBox="480 54 24 20"><path d="M491.9 60V72M485.6 66.5L491.9 60.2L498.2 66.5" fill="none" stroke="#5db05a" stroke-width="4.4" stroke-linejoin="miter" stroke-linecap="butt"/></svg>
<div class="abs big" style="left:509px;top:57.4px">13.43%</div>
<div class="abs sub" style="left:437.5px;top:79.7px;font-size:10.35px">Rendite des Brokerage-Kontos (<span class="link">MWR</span>)</div>

<div class="abs tab" style="left:28.6px">7D</div><div class="abs tab" style="left:56px">MTD</div><div class="abs tab n1" style="left:91px">1M</div><div class="abs tab" style="left:117.4px">YTD</div><div class="abs tab n1" style="left:150.3px">1Y</div><div class="abs tab act" style="left:174.7px">INCEPTION</div><div class="abs tab" style="left:238.7px">CUSTOM</div>
<div class="abs lab" style="left:492.6px;top:130.8px">Anzeigen nach:</div>
<div class="abs sel">Finanzinstrument<svg style="position:absolute;left:89.9px;top:6.1px" width="7" height="10" viewBox="0 0 7 10"><path d="M1 3.6L3.5 0.3L6 3.6ZM1 5.6L3.5 8.9L6 5.6Z" fill="#222"/></svg></div>

<div class="abs h2">Nettovermögenswert</div>
<table class="t">
<thead><tr><th class="c0"></th><th class="c1">Anfangswert</th><th class="c2">Endwert</th><th class="c3">Ändern</th><th class="c4">Ertrag</th><th class="c5"></th></tr></thead>
<tbody>
<tr><td class="c0"><i class="sq" style="background:#3d9ad6"></i>Aktien</td><td>0.00</td><td><b class="o">1</b><b class="o">1</b><b class="s">7</b><b class="p">,</b>024<b class="p">.</b>34</td><td class="g"><b class="o">1</b><b class="o">1</b><b class="s">7</b><b class="p">,</b>024<b class="p">.</b>34</td><td class="g"><b class="s">7</b><b class="p">.</b>6<b class="o">1</b>%</td><td class="c5"><svg width="8" height="10" viewBox="0 0 8 10"><path d="M1.7 1.3L5.7 5L1.7 8.7" fill="none" stroke="#c8c8c8" stroke-width="1.9"/></svg></td></tr>
<tr><td class="c0"><i class="sq" style="background:#a2a52c"></i>Cash</td><td>0.00</td><td>42<b class="s">7</b><b class="p">.</b><b class="o">1</b><b class="o">1</b></td><td class="g">42<b class="s">7</b><b class="p">.</b><b class="o">1</b><b class="o">1</b></td><td class="g">206<b class="p">.</b>43%</td><td class="c5"><svg width="8" height="10" viewBox="0 0 8 10"><path d="M1.7 1.3L5.7 5L1.7 8.7" fill="none" stroke="#c8c8c8" stroke-width="1.9"/></svg></td></tr>
<tr class="tot"><td class="c0">Gesamt</td><td>N/A</td><td>117,450.42</td><td>N/A</td><td class="g"><b class="o">1</b>3<b class="p">.</b>43%</td><td class="c5"></td></tr>
</tbody>
</table>
<div class="vd" style="left:351.2px"></div><div class="vd" style="left:514.1px"></div>
</body>
</html>
